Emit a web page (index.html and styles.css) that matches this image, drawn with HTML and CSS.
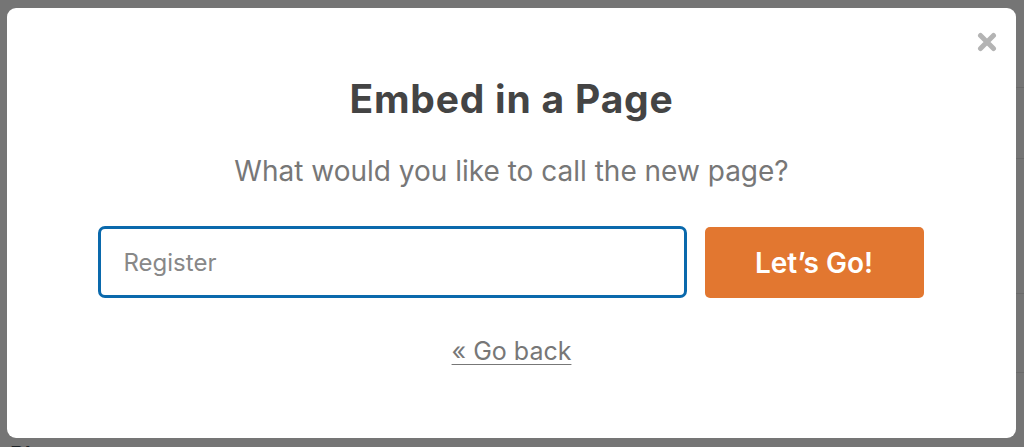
FILE: index.html
```html
<!DOCTYPE html>
<html lang="en">
<head>
<meta charset="utf-8">
<title>Embed in a Page</title>
<link rel="stylesheet" href="styles.css">
</head>
<body>
<div class="backdrop">
  <div class="modal">
    <button class="close" aria-label="Close">
      <svg viewBox="0 0 20 20" width="20" height="20" aria-hidden="true">
        <path d="M3.5 3.5 L16.5 16.5 M16.5 3.5 L3.5 16.5" stroke="#b4b4b4" stroke-width="5" stroke-linecap="round" fill="none"/>
      </svg>
    </button>
    <h2 class="title">Embed in a Page</h2>
    <p class="subtitle">What would you like to call the new page?</p>
    <div class="row">
      <input class="name-input" type="text" placeholder="Register">
      <button class="go">Let’s Go!</button>
    </div>
    <a class="back" href="#">« Go back</a>
  </div>
  <h1 class="page-heading">Pl</h1>
</div>
</body>
</html>
```
FILE: styles.css
```css
* { box-sizing: border-box; }
html, body { margin: 0; padding: 0; }
body {
  width: 1024px;
  height: 447px;
  overflow: hidden;
  font-family: Inter, "Noto Sans", "Liberation Sans", sans-serif;
  background: #757575;
}
.backdrop {
  height: 447px;
  overflow: hidden;
  padding: 8px 8px 0 7px;
  background:
    linear-gradient(#6a6a6a, #6a6a6a) no-repeat right 0 top 87px / 8px 1px,
    linear-gradient(#6a6a6a, #6a6a6a) no-repeat right 0 top 158px / 8px 1px,
    linear-gradient(#6a6a6a, #6a6a6a) no-repeat right 0 top 293px / 8px 1px,
    linear-gradient(#6a6a6a, #6a6a6a) no-repeat right 0 top 372px / 8px 1px,
    #757575;
}
.modal {
  position: relative;
  height: 430px;
  background: #fff;
  border-radius: 9px;
  padding-top: 69px;
  display: flex;
  flex-direction: column;
  align-items: center;
}
.close {
  position: absolute;
  top: 24px;
  right: 19px;
  width: 20px;
  height: 20px;
  padding: 0;
  border: 0;
  background: none;
  display: flex;
}
.title {
  margin: 0;
  font-size: 39px;
  line-height: 44px;
  font-weight: 700;
  color: #444;
  letter-spacing: 0.8px;
}
.subtitle {
  margin: 35px 0 0;
  font-size: 28px;
  line-height: 30px;
  color: #777;
  font-weight: 400;
}
.row {
  margin-top: 40px;
  display: flex;
  align-items: flex-end;
  gap: 18px;
  margin-right: 2px;
}
.name-input {
  width: 589px;
  height: 72px;
  border: 3px solid #0a69ac;
  border-radius: 7px;
  padding: 0 23px;
  font-family: inherit;
  font-size: 24px;
  color: #444;
  outline: none;
  background: #fff;
}
.name-input::placeholder { color: #888; }
.go {
  width: 219px;
  height: 71px;
  border: 0;
  border-radius: 5px;
  background: #e27730;
  color: #fff;
  font-family: inherit;
  font-size: 28px;
  font-weight: 600;
}
.back {
  margin-top: 38px;
  font-size: 25px;
  line-height: 30px;
  color: #777;
  text-decoration: underline;
  text-underline-offset: 4px;
  text-decoration-thickness: 1px;
}
.page-heading {
  margin: 3px 0 0 3px;
  font-size: 23px;
  line-height: 28px;
  font-weight: 600;
  color: #1d2327;
}
```
